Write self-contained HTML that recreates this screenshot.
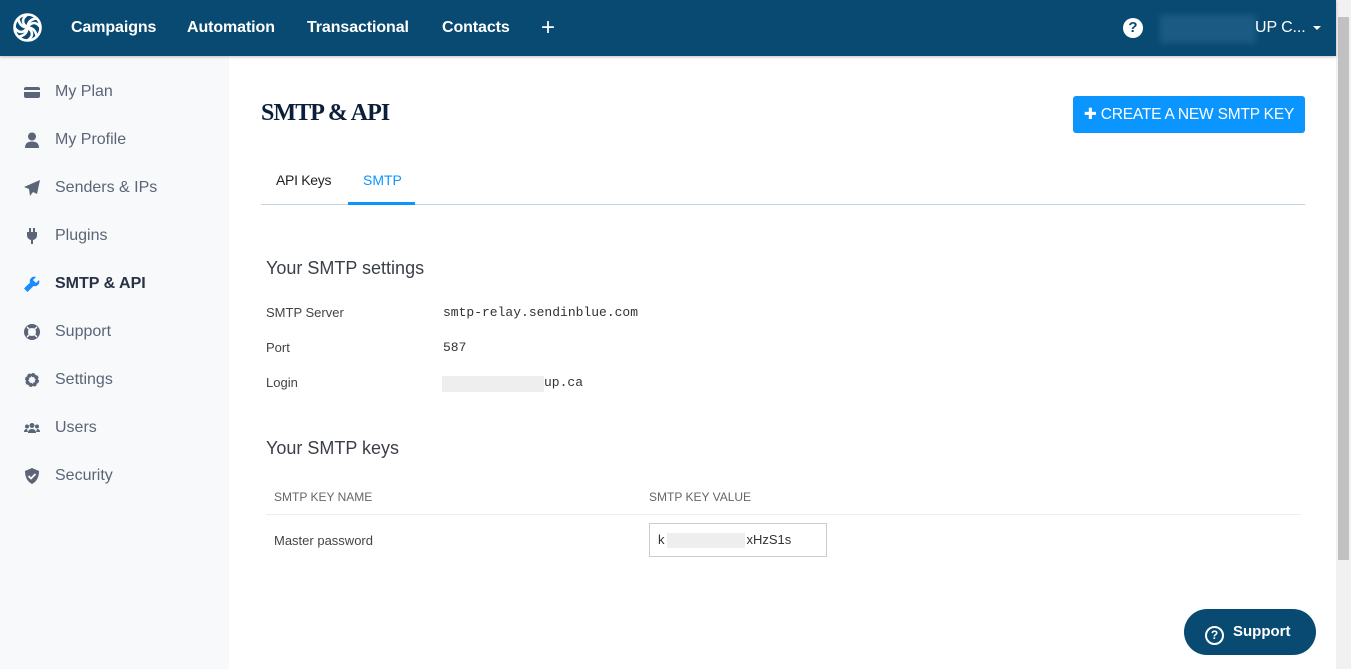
<!DOCTYPE html>
<html><head><style>
*{box-sizing:border-box;margin:0;padding:0}
body{width:1351px;height:669px;overflow:hidden;font-family:"Liberation Sans",sans-serif;background:#fff;position:relative}
.hdr{position:absolute;left:0;top:0;width:1336px;height:56px;background:#094a72;box-shadow:0 1px 3px rgba(0,0,0,.25);z-index:2}
.nav{position:absolute;top:19px;color:#fff;font-size:16px;font-weight:bold;letter-spacing:-.1px}
.side{position:absolute;left:0;top:56px;width:229px;height:613px;background:#f8f9fb}
.si{position:absolute;left:55px;font-size:16px;color:#5b6577}
.ic{position:absolute;left:24px;width:16px;height:16px}
.sb{position:absolute;left:1336px;top:0;width:15px;height:669px;background:#f1f1f1}
.thumb{position:absolute;left:1338px;top:17px;width:11px;height:543px;background:#c1c1c1}
.lbl{position:absolute;left:266px;font-size:13px;color:#444}
.val{position:absolute;left:443px;font-family:"Liberation Mono",monospace;font-size:13px;color:#333}
</style></head><body>
<div class="hdr">
<svg style="position:absolute;left:11px;top:11px" width="33" height="33" viewBox="0 0 33 33" fill="none" stroke="#fff" stroke-width="2.6"><circle cx="16.5" cy="16.5" r="13"/><path d="M16.5 3.5c-6 4-6 9 0 13M29.5 16.5c-4-6-9-6-13 0M16.5 29.5c6-4 6-9 0-13M3.5 16.5c4 6 9 6 13 0M7.3 7.3c1 7 5 9 9.2 9.2M25.7 7.3c-7 1-9 5-9.2 9.2M25.7 25.7c-1-7-5-9-9.2-9.2M7.3 25.7c7-1 9-5 9.2-9.2"/></svg>
<div class="nav" style="left:71px">Campaigns</div>
<div class="nav" style="left:187px">Automation</div>
<div class="nav" style="left:307px">Transactional</div>
<div class="nav" style="left:442px">Contacts</div>
<div class="nav" style="left:541px;top:14px;font-size:24px;font-weight:normal">+</div>
<div style="position:absolute;left:1123px;top:18px;width:20px;height:20px;border-radius:50%;background:#fff;color:#094a72;font-weight:bold;font-size:15px;text-align:center;line-height:20px">?</div>
<div style="position:absolute;left:1160px;top:15px;width:96px;height:28px;background:#1b5b83;filter:blur(3px)"></div>
<div class="nav" style="left:1255px;font-weight:normal">UP C...</div>
<div style="position:absolute;left:1313px;top:26px;border:4px solid transparent;border-top:4px solid #fff"></div>
</div>
<div class="side">
<div class="ic" style="height:11px;background:#5b6577;border-radius:2px;top:31px"><div style="margin-top:3px;height:2px;background:#f8f9fb"></div></div>
<div class="si" style="top:27px">My Plan</div>
<svg class="ic" style="top:76px" viewBox="0 0 16 16" fill="#5b6577"><circle cx="8" cy="4.5" r="4"/><path d="M1 16c0-5 3-6.5 7-6.5s7 1.5 7 6.5z"/></svg>
<div class="si" style="top:75px">My Profile</div>
<svg class="ic" style="top:124px" viewBox="0 0 16 16" fill="#5b6577"><path d="M16 0L0 7l5 2 1 7 3-4 4 2z"/></svg>
<div class="si" style="top:123px">Senders &amp; IPs</div>
<svg class="ic" style="top:172px" viewBox="0 0 16 16" fill="#5b6577"><path d="M5 0h2v4H5zM9 0h2v4H9zM3 4h10v4a5 5 0 0 1-4 4v4H7v-4a5 5 0 0 1-4-4z"/></svg>
<div class="si" style="top:171px">Plugins</div>
<svg class="ic" style="top:220px" viewBox="0 0 16 16" fill="#1a8cff"><path d="M15 4l-3 3-3-3 3-3a4.5 4.5 0 0 0-6 5.5L0 12.5 3.5 16l6-6A4.5 4.5 0 0 0 15 4z"/></svg>
<div class="si" style="top:219px;font-weight:bold;color:#283245">SMTP &amp; API</div>
<svg class="ic" style="top:268px" viewBox="0 0 16 16"><circle cx="8" cy="8" r="6" fill="none" stroke="#5b6577" stroke-width="4"/><path d="M3 3l3 3M13 3l-3 3M3 13l3-3M13 13l-3-3" stroke="#f8f9fb" stroke-width="1.5"/></svg>
<div class="si" style="top:267px">Support</div>
<svg class="ic" style="top:316px" viewBox="0 0 16 16"><circle cx="8" cy="8" r="5" fill="none" stroke="#5b6577" stroke-width="4" stroke-dasharray="2.5 1.4"/><circle cx="8" cy="8" r="5" fill="none" stroke="#5b6577" stroke-width="2.5"/></svg>
<div class="si" style="top:315px">Settings</div>
<svg class="ic" style="top:364px" viewBox="0 0 16 16" fill="#5b6577"><circle cx="8" cy="5.5" r="2.5"/><circle cx="3" cy="6.5" r="2"/><circle cx="13" cy="6.5" r="2"/><path d="M4 13c0-3 2-4 4-4s4 1 4 4zM0 12c0-2 1-3 3-3l1 3zM16 12c0-2-1-3-3-3l-1 3z"/></svg>
<div class="si" style="top:363px">Users</div>
<svg class="ic" style="top:412px" viewBox="0 0 16 16" fill="#5b6577"><path d="M8 0l7 3c0 7-3 11-7 13C4 14 1 10 1 3z"/><path d="M4.5 8l2.5 2.5 4.5-4.5" stroke="#f8f9fb" stroke-width="1.8" fill="none"/></svg>
<div class="si" style="top:411px">Security</div>
</div>
<div style="position:absolute;left:261px;top:100px;font-family:'Liberation Serif',serif;font-weight:bold;font-size:24px;color:#0b1f3a;letter-spacing:-.9px">SMTP &amp; API</div>
<div style="position:absolute;left:1073px;top:96px;width:232px;height:37px;background:#0b96ff;border-radius:3px;color:#fff;font-size:15.5px;line-height:37px;text-align:center;letter-spacing:-.2px">✚ CREATE A NEW SMTP KEY</div>
<div style="position:absolute;left:276px;top:172px;font-size:14px;color:#222;letter-spacing:-.3px">API Keys</div>
<div style="position:absolute;left:363px;top:172px;font-size:14px;color:#0b96ff">SMTP</div>
<div style="position:absolute;left:261px;top:204px;width:1044px;height:1px;background:#c5d3df"></div>
<div style="position:absolute;left:348px;top:202px;width:67px;height:3px;background:#0b96ff"></div>
<div style="position:absolute;left:266px;top:258px;font-size:18px;color:#3a3f48">Your SMTP settings</div>
<div class="lbl" style="top:305px">SMTP Server</div><div class="val" style="top:305px">smtp-relay.sendinblue.com</div>
<div class="lbl" style="top:340px">Port</div><div class="val" style="top:340px">587</div>
<div class="lbl" style="top:375px">Login</div>
<div style="position:absolute;left:442px;top:376px;width:102px;height:16px;background:#eee"></div>
<div class="val" style="top:375px;left:544px">up.ca</div>
<div style="position:absolute;left:266px;top:438px;font-size:18px;color:#3a3f48">Your SMTP keys</div>
<div style="position:absolute;left:274px;top:490px;font-size:12px;color:#666">SMTP KEY NAME</div>
<div style="position:absolute;left:649px;top:490px;font-size:12px;color:#666">SMTP KEY VALUE</div>
<div style="position:absolute;left:266px;top:514px;width:1035px;height:1px;background:#eceef0"></div>
<div style="position:absolute;left:274px;top:533px;font-size:13px;color:#444">Master password</div>
<div style="position:absolute;left:649px;top:523px;width:178px;height:34px;border:1px solid #ccc;font-size:13px;color:#333;line-height:32px;padding-left:8px">k<span style="display:inline-block;width:78px;height:15px;background:#eee;vertical-align:middle;margin:0 2px"></span>xHzS1s</div>
<div style="position:absolute;left:1184px;top:609px;width:132px;height:46px;border-radius:23px;background:#094a72;color:#fff;font-weight:bold;font-size:15px;line-height:46px;padding-left:21px"><span style="display:inline-block;width:19px;height:19px;border:2px solid #fff;border-radius:50%;font-size:12px;line-height:15px;text-align:center;vertical-align:-3px;margin-right:9px">?</span>Support</div>
<div class="sb"></div><div class="thumb"></div>
</body></html>
